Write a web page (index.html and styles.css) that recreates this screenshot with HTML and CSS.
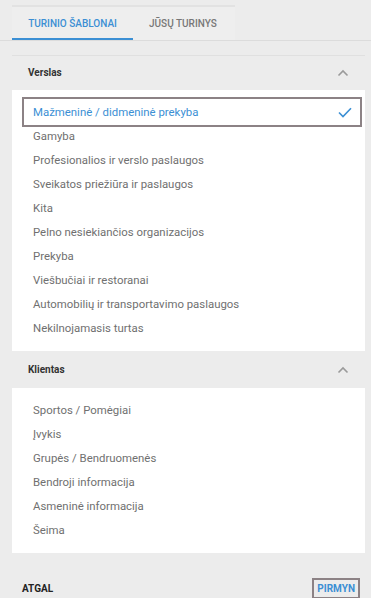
FILE: index.html
```html
<!DOCTYPE html>
<html lang="lt">
<head>
<meta charset="utf-8">
<link rel="stylesheet" href="styles.css">
</head>
<body>
<div class="top">
  <div class="tabs">
    <div class="tab active">TURINIO ŠABLONAI</div>
    <div class="tab">JŪSŲ TURINYS</div>
  </div>
</div>
<div class="content">
  <div class="section-header first">
    <span>Verslas</span>
    <svg class="chev" width="12" height="8" viewBox="0 0 12 8"><path d="M1.5 6.5 L6 2 L10.5 6.5" fill="none" stroke="#9a9a9a" stroke-width="1.6"/></svg>
  </div>
  <div class="panel">
    <div class="item selected">
      <span>Mažmeninė / didmeninė prekyba</span>
      <svg width="14" height="11" viewBox="0 0 14 11"><path d="M1 5.5 L5 9.5 L13 1.2" fill="none" stroke="#3b8fd4" stroke-width="1.6"/></svg>
    </div>
    <div class="item">Gamyba</div>
    <div class="item">Profesionalios ir verslo paslaugos</div>
    <div class="item">Sveikatos priežiūra ir paslaugos</div>
    <div class="item">Kita</div>
    <div class="item">Pelno nesiekiančios organizacijos</div>
    <div class="item">Prekyba</div>
    <div class="item">Viešbučiai ir restoranai</div>
    <div class="item">Automobilių ir transportavimo paslaugos</div>
    <div class="item">Nekilnojamasis turtas</div>
  </div>
  <div class="section-header">
    <span>Klientas</span>
    <svg class="chev" width="12" height="8" viewBox="0 0 12 8"><path d="M1.5 6.5 L6 2 L10.5 6.5" fill="none" stroke="#9a9a9a" stroke-width="1.6"/></svg>
  </div>
  <div class="panel">
    <div class="item">Sportos / Pomėgiai</div>
    <div class="item">Įvykis</div>
    <div class="item">Grupės / Bendruomenės</div>
    <div class="item">Bendroji informacija</div>
    <div class="item">Asmeninė informacija</div>
    <div class="item">Šeima</div>
  </div>
</div>
<div class="footer">
  <span class="back">ATGAL</span>
  <span class="next">PIRMYN</span>
</div>
</body>
</html>
```
FILE: styles.css
```css
html, body {
  margin: 0;
  padding: 0;
}
body {
  background: #ececec;
  font-family: Roboto, "Liberation Sans", sans-serif;
  width: 371px;
  height: 598px;
  overflow: hidden;
}
.top {
  padding-top: 5px;
  border-bottom: 1px solid #dcdcdc;
}
.tabs {
  margin-left: 12px;
  width: 223px;
  border-top: 2px solid #e2e2e2;
  background: #eeeeee;
  display: flex;
}
.tab {
  height: 33px;
  box-sizing: border-box;
  display: flex;
  align-items: center;
  justify-content: center;
  white-space: nowrap;
  font-size: 10px;
  font-weight: 500;
  color: #777;
  padding: 0 16px;
}
.tab.active {
  width: 121px;
  color: #3b8fd4;
  border-bottom: 2px solid #3b8fd4;
  padding-top: 2px;
}
.content {
  margin: 14px 6px 0 12px;
  border-top: 1px solid #e0e0e0;
}
.section-header {
  height: 37px;
  display: flex;
  align-items: center;
  justify-content: space-between;
  padding: 0 16px;
  font-size: 10px;
  font-weight: 700;
  color: #333;
}
.section-header.first {
  height: 34px;
  padding-bottom: 1px;
  box-sizing: border-box;
}
.panel {
  background: #fff;
  padding: 10px 6px 11px 13px;
}
.item {
  height: 24px;
  display: flex;
  align-items: center;
  font-size: 11.4px;
  color: #707070;
  padding-left: 8px;
}
.item.selected {
  color: #3b8fd4;
  justify-content: space-between;
  outline: 2px solid #8c8285;
  outline-offset: 1px;
  padding-right: 7px;
}
.footer {
  display: flex;
  justify-content: space-between;
  align-items: center;
  padding: 0 11px 0 22px;
  margin-top: 25px;
  font-size: 10px;
  font-weight: 700;
}
.back {
  color: #222;
}
.next {
  color: #3b8fd4;
  border: 2px solid #8c8285;
  padding: 3px 3px;
}
```
